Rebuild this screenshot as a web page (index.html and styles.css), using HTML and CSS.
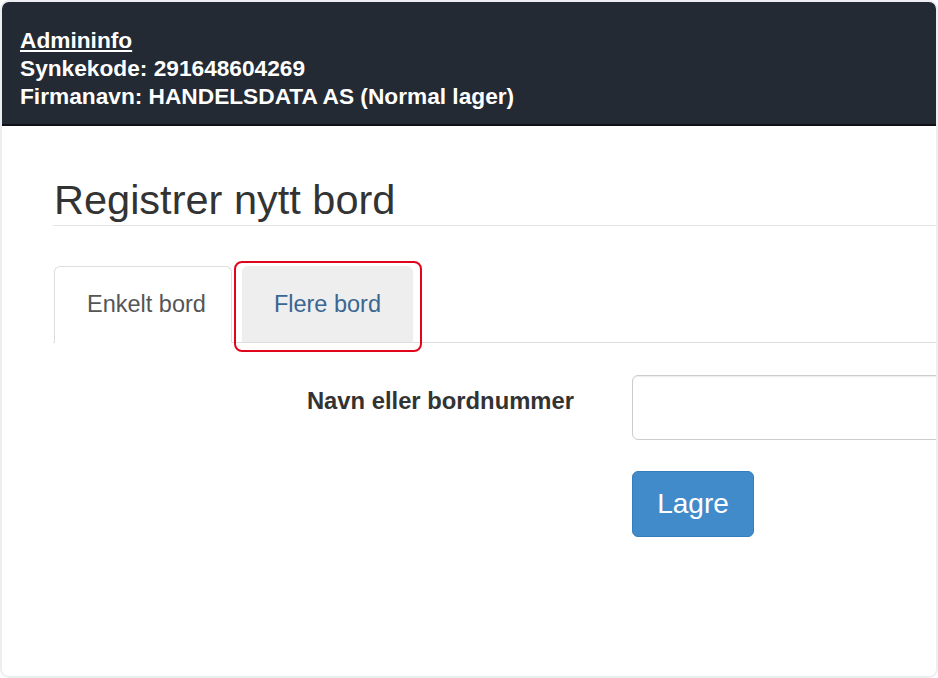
FILE: index.html
```html
<!DOCTYPE html>
<html lang="no">
<head>
<meta charset="utf-8">
<title>Registrer nytt bord</title>
<link rel="stylesheet" href="styles.css">
</head>
<body>
<div class="frame">
  <header class="admin-header">
    <a class="admin-link" href="#">Admininfo</a>
    <div class="admin-line">Synkekode: 291648604269</div>
    <div class="admin-line">Firmanavn: HANDELSDATA AS (Normal lager)</div>
  </header>
  <main class="content">
    <h1 class="page-title">Registrer nytt bord</h1>
    <ul class="tabs">
      <li class="tab tab-active"><a href="#">Enkelt bord</a></li>
      <li class="tab tab-marked"><a href="#">Flere bord</a><span class="highlight"></span></li>
    </ul>
    <form class="form">
      <div class="form-row">
        <label class="form-label" for="navn">Navn eller bordnummer</label>
        <input class="form-input" id="navn" type="text">
      </div>
      <div class="form-actions">
        <button class="btn-save" type="button">Lagre</button>
      </div>
    </form>
  </main>
</div>
</body>
</html>
```
FILE: styles.css
```css
html, body {
  margin: 0;
  padding: 0;
  background: #ffffff;
}

body {
  font-family: "Liberation Sans", Arial, sans-serif;
  color: #333333;
}

.frame {
  box-sizing: border-box;
  width: 938px;
  height: 678px;
  border: 2px solid #eceef2;
  border-radius: 9px;
  overflow: hidden;
  background: #ffffff;
}

.admin-header {
  box-sizing: border-box;
  height: 124px;
  padding: 24px 18px 0;
  background: #232a34;
  border-bottom: 2px solid #0e1115;
  color: #ffffff;
  font-size: 22.7px;
  font-weight: bold;
  line-height: 28px;
}

.admin-link {
  display: block;
  color: #ffffff;
  text-decoration: underline;
  width: max-content;
}

.admin-line {
  white-space: nowrap;
}

.content {
  padding-left: 51px;
}

.page-title {
  margin: 52px 0 0;
  padding: 0 0 3px 1px;
  font-size: 41.5px;
  font-weight: normal;
  line-height: 44px;
  color: #333333;
  border-bottom: 1px solid #e4e4e4;
  width: 1200px;
}

.tabs {
  display: flex;
  list-style: none;
  margin: 40px 0 0;
  padding: 0 0 0 1px;
  border-bottom: 1px solid #dddddd;
  width: 1200px;
}

.tab {
  position: relative;
  margin-bottom: -1px;
  margin-right: 10px;
}

.tab a {
  display: block;
  padding: 24px 25px 25px 32px;
  line-height: 26px;
  font-size: 23.5px;
  text-decoration: none;
  border: 1px solid transparent;
  border-radius: 6px 6px 0 0;
}

.tab-active a {
  color: #555555;
  background: #ffffff;
  border-color: #dddddd #dddddd transparent;
}

.tab-marked a {
  padding: 24px 31px 25px 31px;
  color: #3a6693;
  background: #eeeeee;
  border-color: #eeeeee #eeeeee #dddddd;
}

.highlight {
  position: absolute;
  left: -8px;
  right: -9px;
  top: -5px;
  bottom: -9px;
  border: 2px solid #e1051c;
  border-radius: 8px;
  pointer-events: none;
}

.form {
  margin: 32px 0 0;
}

.form-row {
  display: flex;
  align-items: flex-start;
  gap: 58px;
}

.form-label {
  box-sizing: border-box;
  width: 521px;
  flex: none;
  padding-top: 13px;
  text-align: right;
  font-size: 23.8px;
  font-weight: bold;
  line-height: 26px;
  color: #333333;
}

.form-input {
  box-sizing: border-box;
  flex: none;
  width: 420px;
  height: 65px;
  margin: 0;
  padding: 8px 16px;
  border: 1px solid #cccccc;
  border-radius: 6px;
  box-shadow: inset 0 1px 1px rgba(0, 0, 0, 0.075);
  font-family: inherit;
  font-size: 23px;
  background: #ffffff;
}

.form-actions {
  margin: 31px 0 0 579px;
}

.btn-save {
  box-sizing: border-box;
  width: 122px;
  height: 66px;
  padding: 0;
  border: 1px solid #357ebd;
  border-radius: 6px;
  background: #428bca;
  color: #ffffff;
  font-family: inherit;
  font-size: 28px;
  line-height: 1;
  cursor: pointer;
}
```
